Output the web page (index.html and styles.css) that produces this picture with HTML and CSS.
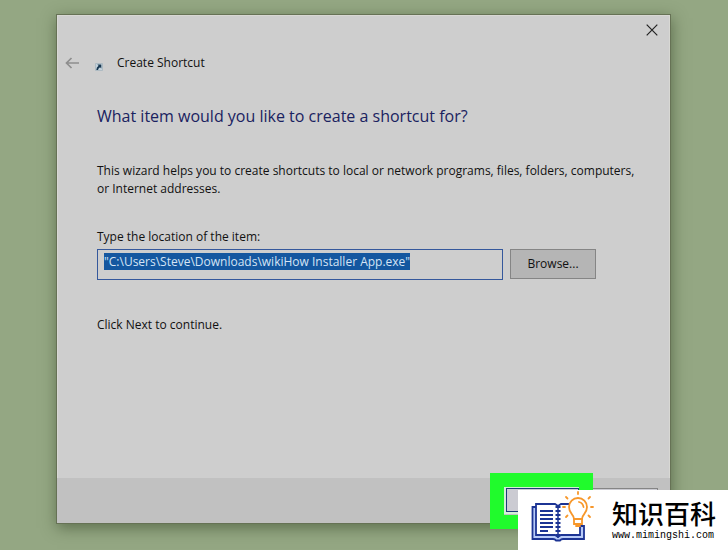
FILE: index.html
```html
<!DOCTYPE html>
<html lang="en">
<head>
  <meta charset="UTF-8" />
  <meta name="viewport" content="width=device-width, initial-scale=1.0" />
  <title>Create Shortcut</title>
  <link rel="stylesheet" href="styles.css">
</head>
<body>
  <main class="window">
    <div class="titlebar">
      <button class="close" type="button" aria-label="Close">
        <svg width="12" height="12" viewBox="0 0 12 12"><path d="M.7.7l10.6 10.6M11.3.7L.7 11.3" stroke="#222" stroke-width="1.2"/></svg>
      </button>
    </div>
    <header class="header">
      <button class="back" type="button" aria-label="Back">
        <svg width="15" height="12" viewBox="0 0 15 12"><path d="M6.5 1L1.5 6l5 5M1.5 6H14" fill="none" stroke="#8e8e8e" stroke-width="1.7"/></svg>
      </button>
      <svg class="shortcut" width="8" height="8" viewBox="0 0 8 8">
        <path d="M.5.5h7v7h-7z" fill="#c3d2dc" stroke="#a3b1bb" stroke-width=".7"/>
        <path d="M2.3 1.4h4v4L5.1 4.2Q3.4 5 3 6.9H1.3Q1.4 4 3.6 2.7z" fill="#17364f"/>
      </svg>
      <span>Create Shortcut</span>
    </header>
    <form class="content">
      <h1>What item would you like to create a shortcut for?</h1>
      <p class="intro">This wizard helps you to create shortcuts to local or network programs, files, folders, computers, or Internet addresses.</p>
      <label for="location">Type the location of the item:</label>
      <div class="row">
        <input type="text" id="location" spellcheck="false" value="&quot;C:\Users\Steve\Downloads\wikiHow Installer App.exe&quot;">
        <button class="browse" type="button">Browse...</button>
      </div>
      <p class="hint">Click Next to continue.</p>
    </form>
    <footer class="footer">
      <div class="next-wrap">
        <button class="next" type="button"></button>
      </div>
      <button class="cancel" type="button"></button>
    </footer>
  </main>

  <div class="watermark">
    <svg class="logo" width="66" height="50" viewBox="0 0 66 50">
      <!-- book -->
      <g fill="none" stroke="#1c3494" stroke-width="1.8">
        <path d="M5 12H1.500v32H22q2 0 3 1.500h4q1-1.500 3-1.500h21V31h-4" fill="#b8cbf8"/>
        <path d="M5 9h20l2 2v31l-2-2H5zM27 11v31l2-2h20V31L38 9h-9z" fill="#fff" stroke="none"/>
        <path d="M38 9h-8l-3 2-3-2H5v31h19l3 2 3-2h19V31"/>
        <path d="M9 16h13M9 20h13M9 24h13M9 28h13M9 32h13M9 36h8"/>
        <path d="M27 10v33" stroke-width="1.500"/>
        <path d="M27 11v31" stroke-width="5" stroke-dasharray="2 2"/>
      </g>
      <!-- bulb -->
      <g fill="none" stroke="#f7972a" stroke-width="1.800" stroke-linecap="round">
        <path d="M43 24c0-5-5-5-5-12a9 9 0 0 1 18 0c0 7-5 7-5 12z" fill="#fff"/>
        <path d="M43 24v5h8v-5zM45 31h4M48 7q4 1 4.500 5"/>
        <path d="M47 -3v2M35 2l1.500 1.500M59 2l-1.500 1.500M32 12h2M60 12h2M35 22l1.500-1.500M59 22l-1.500-1.500"/>
      </g>
    </svg>
    <div class="brand">
      <strong lang="zh-CN">知识百科</strong>
      <span>www.mimingshi.com</span>
    </div>
  </div>

  <script>
    // the path starts out selected
    const box = document.getElementById('location');
    box.focus();
    box.select();
  </script>
</body>
</html>
```

FILE: styles.css
```css
* {
  margin: 0;
  padding: 0;
  box-sizing: border-box;
}

body {
  font-family: "Open Sans", "Noto Sans", sans-serif;
  font-size: 12px;
  line-height: 18px;
  color: #111;
  background: #94a783;
  min-height: 100vh;
  padding: 14px 57px 26px 56px;
  display: flex;
  flex-direction: column;
}

button {
  font: inherit;
  color: inherit;
  border: none;
  background: none;
}

svg {
  display: block;
  overflow: visible;
}

.window {
  flex: 1;
  display: flex;
  flex-direction: column;
  background: #cecece;
  border: 1px solid #667255;
  box-shadow: inset 0 0 0 1px #d8d8d4, 1px 4px 14px rgba(40, 55, 25, 0.5);
}

.titlebar {
  display: flex;
  justify-content: flex-end;
  padding: 9px 12px 0 0;
}

.close {
  padding: 0;
}

.header {
  display: flex;
  align-items: center;
  padding: 18px 8px 0;
}

.shortcut {
  margin: 8px 14px 0 15px;
}

.content {
  flex: 1;
  padding: 32px 28px 0 40px;
}

h1 {
  font-size: 16px;
  font-weight: normal;
  line-height: 24px;
  color: #1a2260;
}

.intro {
  margin: 34px 0 30px;
}

label {
  display: block;
}

.row {
  display: flex;
  gap: 7px;
  margin: 3px 46px 36px 0;
}

input {
  flex: 1;
  min-width: 0;
  height: 31px;
  padding: 2px 6px 8px;
  font: inherit;
  line-height: 18px;
  color: #111;
  background: #cecece;
  border: 1px solid #35589c;
  outline: none;
}

input::selection {
  color: #d5e4f5;
  background: #1457a0;
}

.browse {
  width: 86px;
  height: 30px;
  background: #b5b5b5;
  border: 1px solid #858585;
}

.footer {
  display: flex;
  justify-content: flex-end;
  gap: 6px;
  padding: 10px 12px 11px;
  background: #c1c1c1;
}

.next-wrap {
  position: relative;
}

/* green frame drawn round the Next button */
.next-wrap::before {
  content: "";
  position: absolute;
  inset: -15px -14px -17px -16px;
  border: 14px solid #20fb2c;
}

.next,
.cancel {
  display: block;
  width: 73px;
  height: 24px;
  background: #cbcbd2;
  border: 1px solid #858585;
}

.next {
  border: 1px solid #1c3b78;
  outline: 2px solid #d3eed6;
}

.watermark {
  position: fixed;
  right: 0;
  bottom: 0;
  display: flex;
  align-items: center;
  gap: 15px;
  width: 210px;
  height: 60px;
  padding-left: 13px;
  background: #fff;
}

.brand {
  display: flex;
  flex-direction: column;
  color: #000;
}

.brand strong {
  font-family: "Noto Sans CJK SC", sans-serif;
  font-size: 26px;
  font-weight: 500;
  line-height: 32px;
}

.brand span {
  font-family: "Liberation Mono", monospace;
  font-size: 10px;
  line-height: 14px;
}
```
